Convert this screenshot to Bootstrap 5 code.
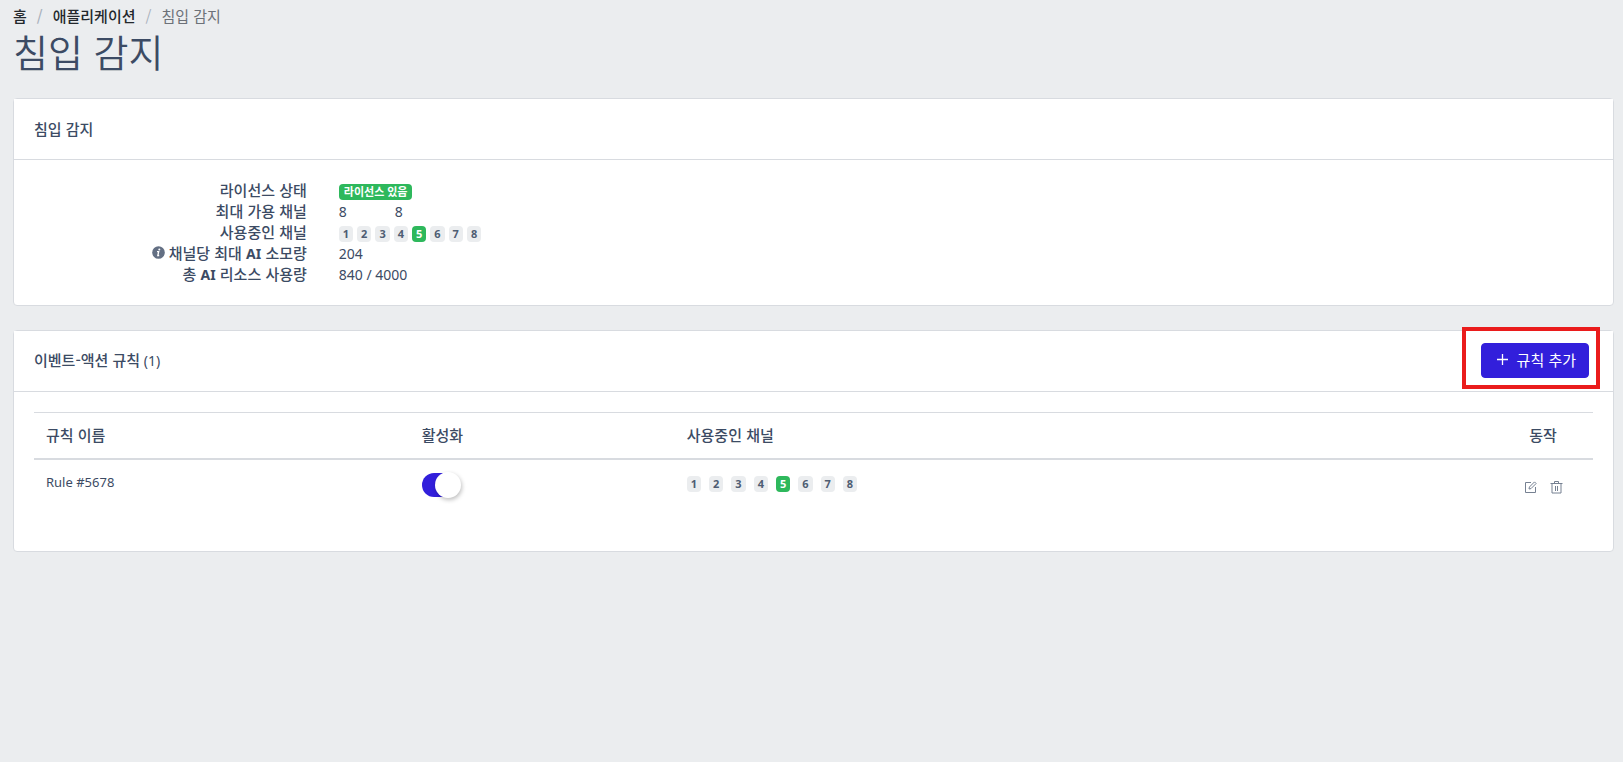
<!DOCTYPE html>
<html lang="ko">
<head>
<meta charset="utf-8">
<meta name="viewport" content="width=device-width, initial-scale=1">
<title>침입 감지</title>
<link href="https://cdn.jsdelivr.net/npm/bootstrap@5.3.0/dist/css/bootstrap.min.css" rel="stylesheet">
<style>
  :root {
    --ink: #3c4b64;
    --line: #d8dbe0;
    --brand: #321fdb;
    --ok: #2eb85c;
    --soft: #ebedef;
  }
  body {
    font-family: "Noto Sans", "Noto Sans CJK KR", sans-serif;
    font-size: 14px;
    line-height: 21px;
    color: var(--ink);
    background: var(--soft);
  }
  .page { padding: 6px 9px 24px 13px; }
  .ko { font-family: "Noto Sans CJK KR", sans-serif; font-size: 15px; line-height: 19px; font-weight: 500; }
  .breadcrumb { --bs-breadcrumb-item-padding-x: 10px; --bs-breadcrumb-divider-color: #a9b1bc; margin: 0; }
  .breadcrumb a { color: #23282c; text-decoration: none; }
  .breadcrumb .active { color: #6c7178; font-weight: 400; }
  .page-title { font-family: "Noto Sans CJK KR", sans-serif; font-size: 38px; line-height: 47px; font-weight: 350; margin: 2px 0 24px; }
  .panel { border: 1px solid var(--line); border-radius: 4px; color: var(--ink); margin-bottom: 24px; }
  .panel-head { min-height: 61px; padding: 0 24px 2px 20px; background: #fff; border-bottom: 1px solid var(--line); }
  .panel .card-body { padding: 20px; }
  .facts > div { height: 21px; }
  .facts dt { width: 17.5%; height: 19px; text-align: right; }
  .facts .latin { font-family: "Noto Sans", sans-serif; font-size: 14px; font-weight: 700; }
  .facts dd { margin: 0 0 0 32px; height: 21px; }
  .tag { display: flex; align-items: center; justify-content: center; height: 16px; min-width: 14px; padding: 0 4px; border-radius: 4px; background: var(--soft); color: #4f5d73; font-size: 11px; line-height: 16px; font-weight: 700; }
  .tag.on { background: var(--ok); color: #fff; }
  .tag.licence { padding: 0 5px; }
  .usage { gap: 48px; }
  .rules { --bs-table-color: var(--ink); --bs-table-bg: #fff; margin-bottom: 22px; table-layout: fixed; border-top: 1px solid var(--line); }
  .rules th { padding: 12px 12px 14px; border-bottom: 2px solid var(--line); vertical-align: middle; }
  .rules td { padding: 12px; border: 0; vertical-align: top; }
  .rules .rule-name { font-size: 13px; }
  .rules .c-name { width: 24.1%; }
  .rules .c-active { width: 17%; }
  .rules .c-act { width: 100px; }
  .toggle { appearance: none; display: block; width: 39px; height: 24px; margin: 1px 0 0; border-radius: 12px; background: #c4c9d0; cursor: pointer; }
  .toggle::before { content: ""; display: block; position: relative; top: -1px; width: 26px; height: 26px; border-radius: 50%; background: #fff; box-shadow: 1px 2px 4px rgba(0, 0, 0, .25); }
  .toggle:checked { background: linear-gradient(90deg, var(--brand) 30px, transparent 30px); }
  .toggle:checked::before { margin-left: 13px; }
  .add-btn { --bs-btn-bg: var(--brand); --bs-btn-border-color: var(--brand); --bs-btn-hover-bg: #2a1ab9; --bs-btn-color: #fff; --bs-btn-hover-color: #fff; height: 35px; padding: 0 12px 1px 14px; border-radius: 4px; font-weight: 400; white-space: nowrap; }
  .callout-box { position: absolute; inset: -16px -11px -11px -19px; border: 4px solid #ea1c1c; pointer-events: none; }
  .actions { gap: 13px; }
  .icon-btn { display: block; padding: 0; border: 0; background: none; color: #768192; line-height: 0; }
</style>
<script src="https://cdn.jsdelivr.net/npm/bootstrap@5.3.0/dist/js/bootstrap.bundle.min.js"></script>
</head>
<body>
<main class="page">
  <nav aria-label="breadcrumb">
    <ol class="breadcrumb ko">
      <li class="breadcrumb-item"><a href="#">홈</a></li>
      <li class="breadcrumb-item"><a href="#">애플리케이션</a></li>
      <li class="breadcrumb-item active" aria-current="page">침입 감지</li>
    </ol>
  </nav>
  <h1 class="page-title">침입 감지</h1>

  <section class="card panel">
    <div class="panel-head d-flex align-items-center"><span class="ko">침입 감지</span></div>
    <div class="card-body">
      <dl class="facts m-0">
        <div class="d-flex"><dt class="ko">라이선스 상태</dt><dd class="d-flex align-items-start pt-1"><span class="tag on licence">라이선스 있음</span></dd></div>
        <div class="d-flex"><dt class="ko">최대 가용 채널</dt><dd class="d-flex usage"><span>8</span><span>8</span></dd></div>
        <div class="d-flex"><dt class="ko">사용중인 채널</dt><dd class="d-flex align-items-start gap-1 pt-1"><span class="tag">1</span><span class="tag">2</span><span class="tag">3</span><span class="tag">4</span><span class="tag on">5</span><span class="tag">6</span><span class="tag">7</span><span class="tag">8</span></dd></div>
        <div class="d-flex"><dt class="ko d-flex align-items-center justify-content-end gap-1">
          <svg width="13" height="13" viewBox="0 0 13 13" aria-hidden="true"><circle cx="6.500" cy="6.500" r="6.300" fill="#636f83"/><circle cx="7.300" cy="3.400" r="1" fill="#fff"/><path d="M5 5.700h1.700L5.800 9.500h1.400" fill="none" stroke="#fff" stroke-width="1.300"/></svg>
          <span>채널당 최대 <span class="latin">AI</span> 소모량</span></dt><dd>204</dd></div>
        <div class="d-flex"><dt class="ko">총 <span class="latin">AI</span> 리소스 사용량</dt><dd>840 / 4000</dd></div>
      </dl>
    </div>
  </section>

  <section class="card panel">
    <div class="panel-head d-flex align-items-center justify-content-between">
      <div><span class="ko">이벤트-액션 규칙</span> (1)</div>
      <div class="position-relative">
        <button type="button" class="btn add-btn ko d-flex align-items-center">
          <svg class="me-2" width="13" height="13" viewBox="0 0 13 13" aria-hidden="true"><path d="M6.500 1v11M1 6.500h11" stroke="currentColor" stroke-width="1.300"/></svg>규칙 추가
        </button>
        <div class="callout-box"></div>
      </div>
    </div>
    <div class="card-body">
      <table class="table rules">
        <thead>
          <tr><th class="ko c-name" scope="col">규칙 이름</th><th class="ko c-active" scope="col">활성화</th><th class="ko" scope="col">사용중인 채널</th><th class="ko c-act text-center" scope="col">동작</th></tr>
        </thead>
        <tbody>
          <tr>
            <td class="rule-name">Rule #5678</td>
            <td><input class="toggle" type="checkbox" role="switch" aria-label="활성화" checked></td>
            <td><div class="d-flex gap-2 pt-1"><span class="tag">1</span><span class="tag">2</span><span class="tag">3</span><span class="tag">4</span><span class="tag on">5</span><span class="tag">6</span><span class="tag">7</span><span class="tag">8</span></div></td>
            <td><div class="actions d-flex justify-content-center pt-2">
              <button type="button" class="icon-btn" aria-label="수정"><svg width="13" height="14" viewBox="0 0 13 14" fill="none" stroke="currentColor"><path d="M7 2.500H1.500v10h10V7" /><path d="M5 9l.4-2L10.500 1.900l1.600 1.600L7 8.600z"/></svg></button>
              <button type="button" class="icon-btn" aria-label="삭제"><svg width="13" height="14" viewBox="0 0 13 14" fill="none" stroke="currentColor"><path d="M.5 3.500h12M4.500 3.500v-2h4v2M2 3.500v9.500h9V3.500M5.500 6v5M7.500 6v5"/></svg></button>
            </div></td>
          </tr>
        </tbody>
      </table>
    </div>
  </section>
</main>
</body>
</html>
